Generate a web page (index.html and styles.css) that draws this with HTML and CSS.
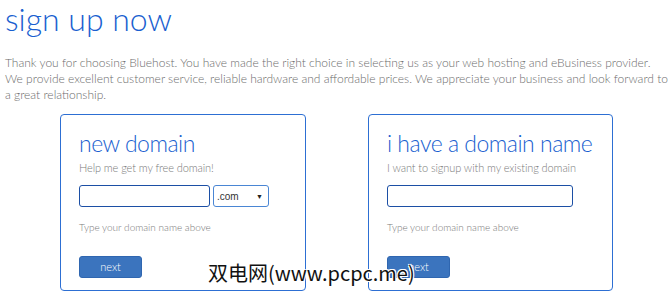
FILE: index.html
```html
<!DOCTYPE html>
<html>
<head>
<meta charset="utf-8">
<link rel="stylesheet" href="styles.css">
</head>
<body>
<div class="page">
  <h1 class="title">sign up now</h1>
  <p class="intro">Thank you for choosing Bluehost. You have made the right choice in selecting us as your web hosting and eBusiness provider.<br>We provide excellent customer service, reliable hardware and affordable prices. We appreciate your business and look forward to<br>a great relationship.</p>
  <div class="cards">
    <div class="card card-new">
      <h2 class="card-title">new domain</h2>
      <p class="card-sub">Help me get my free domain!</p>
      <div class="field-row">
        <div class="input input-short"></div>
        <div class="select"><span>.com</span><span class="arrow">▼</span></div>
      </div>
      <p class="hint">Type your domain name above</p>
      <div class="btn">next</div>
    </div>
    <div class="card card-have">
      <h2 class="card-title">i have a domain name</h2>
      <p class="card-sub">I want to signup with my existing domain</p>
      <div class="field-row">
        <div class="input input-long"></div>
      </div>
      <p class="hint">Type your domain name above</p>
      <div class="btn">next</div>
    </div>
  </div>
  <div class="watermark">双电网(www.pcpc.me)</div>
</div>
</body>
</html>
```
FILE: styles.css
```css
html, body {
  margin: 0;
  padding: 0;
  background: #ffffff;
}
.page {
  position: relative;
  width: 670px;
  height: 300px;
  overflow: hidden;
  padding: 0 0 0 5px;
  box-sizing: border-box;
  font-family: "Lato Light", Lato, "Open Sans", sans-serif;
}
.title {
  margin: 0;
  padding-top: 1px;
  font-size: 32px;
  line-height: 36px;
  font-weight: 300;
  color: #1a5fd0;
}
.intro {
  margin: 18px 0 0 0;
  font-size: 12px;
  line-height: 16px;
  letter-spacing: 0;
  color: #6c6c6c;
  white-space: nowrap;
  font-weight: 400;
}
.cards {
  display: flex;
  gap: 62px;
  padding-left: 55px;
  margin-top: 11px;
}
.card {
  border: 1px solid #2d6fd3;
  border-radius: 4px;
  height: 177px;
  box-sizing: border-box;
  padding: 15px 0 0 18px;
}
.card-new { width: 246px; }
.card-have { width: 245px; }
.card-title {
  margin: 0;
  font-size: 23px;
  line-height: 27px;
  font-weight: 300;
  letter-spacing: -0.5px;
  color: #1a5fd0;
  white-space: nowrap;
}
.card-sub {
  margin: 3px 0 0 0;
  font-size: 11px;
  line-height: 15px;
  letter-spacing: -0.1px;
  color: #7a7a7a;
  white-space: nowrap;
}
.field-row {
  display: flex;
  gap: 3px;
  margin-top: 10px;
}
.input {
  height: 22px;
  box-sizing: border-box;
  border: 1px solid #1c4fa5;
  border-radius: 3px;
}
.input-short { width: 131px; }
.input-long { width: 186px; }
.select {
  width: 56px;
  height: 22px;
  box-sizing: border-box;
  border: 1px solid #4a86d4;
  border-radius: 3px;
  display: flex;
  align-items: center;
  justify-content: space-between;
  padding: 0 5px 0 3px;
  font-family: "Liberation Sans", Arial, sans-serif;
  font-size: 10px;
  color: #333;
}
.arrow {
  font-size: 7px;
  color: #222;
}
.hint {
  margin: 13px 0 0 0;
  font-size: 10px;
  line-height: 14px;
  color: #7a7a7a;
}
.btn {
  margin-top: 22px;
  width: 63px;
  height: 22px;
  background: #3b74be;
  border: 1px solid #2f66b0;
  border-radius: 3px;
  box-sizing: border-box;
  color: #ffffff;
  font-size: 11px;
  line-height: 20px;
  text-align: center;
}
.watermark {
  position: absolute;
  left: 208px;
  top: 260px;
  font-family: "Noto Sans CJK SC", sans-serif;
  font-size: 20px;
  line-height: 26px;
  color: #111;
  text-shadow: -1px -1px 0 #fff, 1px -1px 0 #fff, -1px 1px 0 #fff, 1px 1px 0 #fff;
}
```
